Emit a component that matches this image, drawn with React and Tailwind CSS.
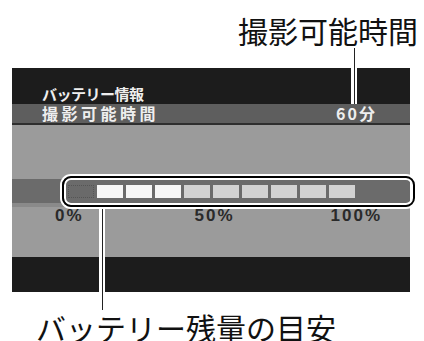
const segments = [
  "dark",
  "on",
  "on",
  "on",
  "off",
  "off",
  "off",
  "off",
  "off",
  "off",
];

const segClass = {
  dark: "bg-[#6a6a6a] border border-dotted border-[#555]",
  on: "bg-[#f6f6f6]",
  off: "bg-[#d2d2d2]",
};

const App = () => {
  return (
    <div
      className="relative w-[424px] h-[341px] bg-white overflow-hidden"
      style={{ fontFamily: '"Noto Sans CJK JP", "Noto Sans", sans-serif' }}
    >
      {/* callout label top */}
      <div className="h-[68px] flex justify-end pr-[6px] pt-[11px]">
        <span className="text-[30px] leading-[38px] text-[#111] font-normal">
          撮影可能時間
        </span>
      </div>

      {/* camera screen */}
      <div className="ml-[12px] w-[398px] h-[224px] flex flex-col">
        <div className="h-[36px] bg-[#1c1c1c] flex items-end pl-[30px] pb-[3px]">
          <span className="text-[15px] leading-[15px] font-bold text-[#eee] tracking-[-0.5px]">
            バッテリー情報
          </span>
        </div>
        <div className="h-[21px] bg-[#5e5e5e] border-b-2 border-[#2e2e2e] flex items-center justify-between pl-[30px] pr-[33px]">
          <span className="text-[16px] leading-[17px] font-bold text-[#eee] tracking-[3.5px]">
            撮影可能時間
          </span>
          <span
            className="text-[16px] leading-[17px] font-bold text-[#eee] tracking-[2px]"
          >
            60分
          </span>
        </div>
        <div className="h-[54px] bg-[#9b9b9b]" />
        <div className="h-[24px] bg-[#6b6b6b] flex items-center pl-[56px] gap-[3px]">
          {segments.map((s, i) => (
            <div key={i} className={`w-[26px] h-[13px] ${segClass[s]}`} />
          ))}
        </div>
        <div className="h-[4px] bg-[#8a8a8a]" />
        <div className="h-[50px] bg-[#9b9b9b] flex items-start">
          <span
            className="ml-[43px] text-[17px] leading-[17px] font-bold text-[#2a2a2a] tracking-[2px]"
            style={{ fontFamily: '"Liberation Sans", sans-serif' }}
          >
            0%
          </span>
          <span
            className="ml-[111px] text-[17px] leading-[17px] font-bold text-[#2a2a2a] tracking-[2px]"
            style={{ fontFamily: '"Liberation Sans", sans-serif' }}
          >
            50%
          </span>
          <span
            className="ml-[96px] text-[17px] leading-[17px] font-bold text-[#2a2a2a] tracking-[2px]"
            style={{ fontFamily: '"Liberation Sans", sans-serif' }}
          >
            100%
          </span>
        </div>
        <div className="flex-1 bg-[#1c1c1c]" />
      </div>

      {/* callout label bottom */}
      <div className="pl-[36px] pt-[16px]">
        <span className="text-[30px] leading-[38px] text-[#111] font-normal whitespace-nowrap">
          バッテリー残量の目安
        </span>
      </div>

      {/* highlight box around gauge */}
      <div className="absolute left-[62px] top-[176px] w-[353px] h-[31px] rounded-[9px] border-2 border-black shadow-[0_0_0_2px_#fff,inset_0_0_0_2px_#fff]" />

      {/* leader lines */}
      <div className="absolute left-[351px] top-[48px] w-[6px] h-[56px] bg-white flex justify-center">
        <div className="w-[1px] h-full bg-[#222]" />
      </div>
      <div className="absolute left-[99px] top-[209px] w-[6px] h-[101px] bg-white flex justify-center">
        <div className="w-[1px] h-full bg-[#222]" />
      </div>
    </div>
  );
};

export default App;
